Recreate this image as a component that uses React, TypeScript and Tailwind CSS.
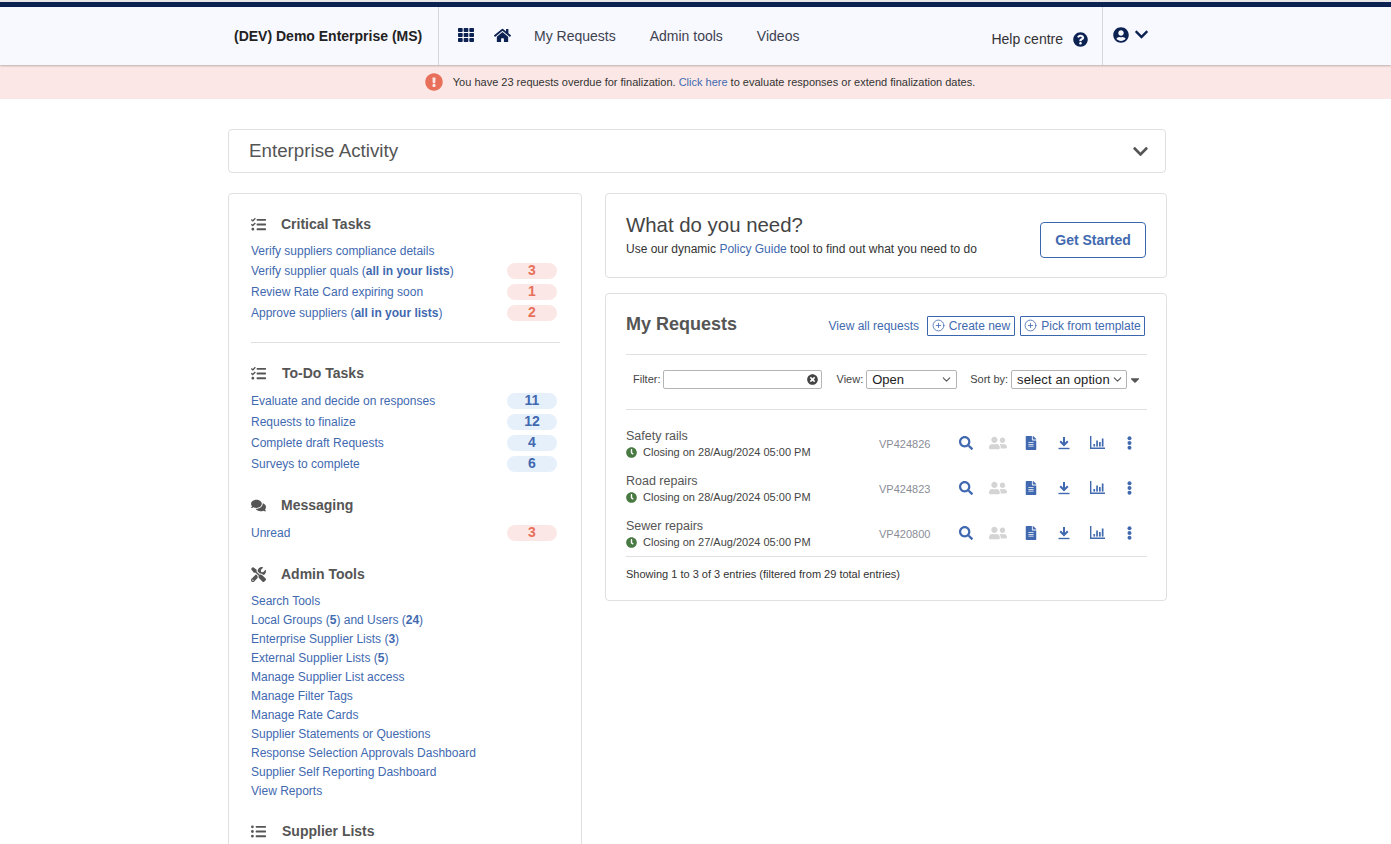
import React from 'react';
import {
  FaTh, FaHome, FaQuestionCircle, FaUserCircle, FaChevronDown, FaExclamationCircle, FaTasks, FaComments, FaTools,
  FaListUl, FaSearch, FaUserFriends, FaFileAlt, FaClock, FaTimesCircle, FaCaretDown,
} from 'react-icons/fa';
import { CirclePlus, ChevronDown } from 'lucide-react';

const link = 'text-[#4169b0]';

const DownloadIcon = () => (
  <svg width="12" height="14" viewBox="0 0 12 14" fill="none" className="text-[#4169b0]">
    <path d="M6 1v7.5M2.2 5.2 6 9l3.8-3.8" stroke="currentColor" strokeWidth="2" />
    <rect x="0.5" y="11.8" width="11" height="1.4" fill="currentColor" />
  </svg>
);

const BarsIcon = () => (
  <svg width="15" height="13" viewBox="0 0 15 13" fill="currentColor">
    <path d="M0 0h1.4v11.6H15V13H0z" />
    <rect x="3.4" y="8" width="1.7" height="2.6" />
    <rect x="6.2" y="4.5" width="1.7" height="6.1" />
    <rect x="9" y="6" width="1.7" height="4.6" />
    <rect x="11.8" y="2.5" width="1.7" height="8.1" />
  </svg>
);

const DotsIcon = () => (
  <svg width="5" height="14" viewBox="0 0 5 14" fill="currentColor">
    <circle cx="2.5" cy="2.2" r="2" />
    <circle cx="2.5" cy="7" r="2" />
    <circle cx="2.5" cy="11.8" r="2" />
  </svg>
);

const Badge = ({ n, red }: { n: number; red?: boolean }) => (
  <span className={`ml-auto mr-[3px] w-[50px] h-4 rounded-lg flex items-center justify-center text-[14px] font-bold ${red ? 'bg-[#fbe8e6] text-[#e8705a]' : 'bg-[#e6f0fb] text-[#4169b0]'}`}>
    {n}
  </span>
);

const Heading = ({ icon, children, gap = 'ml-[15px]' }: { icon: React.ReactNode; children: React.ReactNode; gap?: string }) => (
  <div className="flex items-center h-5 text-[#555]">
    <span className="w-[15px] flex justify-center">{icon}</span>
    <span className={`${gap} text-[14px] font-bold`}>{children}</span>
  </div>
);

const Row = ({ children, n, red }: { children: React.ReactNode; n?: number; red?: boolean }) => (
  <div className={`flex items-center h-[21px] text-[12px] ${link}`}>
    <span>{children}</span>
    {n !== undefined && <Badge n={n} red={red} />}
  </div>
);

const adminLinks: React.ReactNode[] = [
  'Search Tools',
  <>Local Groups (<b>5</b>) and Users (<b>24</b>)</>,
  <>Enterprise Supplier Lists (<b>3</b>)</>,
  <>External Supplier Lists (<b>5</b>)</>,
  'Manage Supplier List access',
  'Manage Filter Tags',
  'Manage Rate Cards',
  'Supplier Statements or Questions',
  'Response Selection Approvals Dashboard',
  'Supplier Self Reporting Dashboard',
  'View Reports',
];

const requests = [
  { name: 'Safety rails', date: '28/Aug/2024', id: 'VP424826' },
  { name: 'Road repairs', date: '28/Aug/2024', id: 'VP424823' },
  { name: 'Sewer repairs', date: '27/Aug/2024', id: 'VP420800' },
];

const App: React.FC = () => {
  return (
    <div className="h-screen overflow-hidden bg-white font-['Liberation_Sans',Arial,sans-serif]">
      <div className="h-[2px] bg-[#e8e8e8]" />
      <div className="h-[5px] bg-[#0b2252]" />
      <header className="relative z-10 h-[58px] bg-[#f8f8ff] shadow-[0_1px_2px_rgba(0,0,0,0.25)] flex pl-[234px]">
        <div className="w-[205px] h-full border-r border-[#d5d5dc] flex items-center">
          <span className="text-[14px] font-bold text-[#222]">(DEV) Demo Enterprise (MS)</span>
        </div>
        <div className="flex items-center pl-[19px] text-[#0b2252]">
          <FaTh size={16} className="mb-[2px]" />
          <FaHome size={17} className="ml-5 mb-[2px]" />
          <span className="ml-[23px] text-[14px] text-[#3d4250]">My Requests</span>
          <span className="ml-[34px] text-[14px] text-[#3d4250]">Admin tools</span>
          <span className="ml-[34px] text-[14px] text-[#3d4250]">Videos</span>
        </div>
        <div className="flex items-center ml-[192px] pt-[6px] text-[#0b2252]">
          <span className="text-[14px] text-[#333]">Help centre</span>
          <FaQuestionCircle size={15} className="ml-[10px]" />
        </div>
        <div className="ml-[14px] h-full border-l border-[#d5d5dc] flex items-center pl-[10px] pb-[3px] text-[#0b2252]">
          <FaUserCircle size={16} />
          <FaChevronDown size={15} className="ml-[5px]" />
        </div>
      </header>
      <div className="h-[34px] bg-[#fbe8e6] flex items-center justify-center text-[11px] text-[#333] pl-[9px]">
        <FaExclamationCircle size={18} className="text-[#e8705a] mr-[10px]" />
        <span>You have 23 requests overdue for finalization. <span className={link}>Click here</span> to evaluate responses or extend finalization dates.</span>
      </div>

      <main className="ml-[228px] w-[939px] pt-[30px]">
        <div className="w-[938px] h-[44px] rounded border border-[#e0e0e0] flex items-center justify-between pl-[20px] pr-[16px]">
          <span className="text-[18.75px] text-[#555]">Enterprise Activity</span>
          <FaChevronDown size={17} className="text-[#555]" />
        </div>

        <div className="flex gap-[23px] mt-5 items-start">
          <aside className="w-[354px] shrink-0 rounded border border-[#e0e0e0] pl-[22px] pr-[21px] pt-[20px] pb-10">
            <Heading icon={<FaTasks size={15} />}>Critical Tasks</Heading>
            <div className="mt-[7px]">
              <div className={`flex items-center h-[19px] text-[12px] ${link}`}>Verify suppliers compliance details</div>
              <Row n={3} red>Verify supplier quals (<b>all in your lists</b>)</Row>
              <Row n={1} red>Review Rate Card expiring soon</Row>
              <Row n={2} red>Approve suppliers (<b>all in your lists</b>)</Row>
            </div>
            <div className="border-t border-[#e0e0e0] mt-[19px] mb-5" />
            <Heading icon={<FaTasks size={15} />} gap="ml-[16px]">To-Do Tasks</Heading>
            <div className="mt-[7px]">
              <Row n={11}>Evaluate and decide on responses</Row>
              <Row n={12}>Requests to finalize</Row>
              <Row n={4}>Complete draft Requests</Row>
              <Row n={6}>Surveys to complete</Row>
            </div>
            <div className="mt-[21px]">
              <Heading icon={<FaComments size={17} />}>Messaging</Heading>
            </div>
            <div className="mt-[7px]">
              <Row n={3} red>Unread</Row>
            </div>
            <div className="mt-[21px]">
              <Heading icon={<FaTools size={15} />}>Admin Tools</Heading>
            </div>
            <div className="mt-[7px]">
              {adminLinks.map((l, i) => (
                <div key={i} className={`h-[19px] flex items-center text-[12px] whitespace-pre ${link}`}>
                  <span>{l}</span>
                </div>
              ))}
            </div>
            <div className="mt-[21px]">
              <Heading icon={<FaListUl size={15} />} gap="ml-[16px]">Supplier Lists</Heading>
            </div>
          </aside>

          <section className="flex-1 min-w-0">
            <div className="h-[85px] rounded border border-[#e0e0e0] flex items-center justify-between pl-5 pr-5">
              <div>
                <div className="text-[20.4px] leading-[24px] text-[#444]">What do you need?</div>
                <div className="text-[12px] leading-[18px] text-[#333] mt-[3px]">
                  Use our dynamic <span className={link}>Policy Guide</span> tool to find out what you need to do
                </div>
              </div>
              <button className="w-[106px] h-9 rounded border border-[#3a66ad] text-[14px] font-bold text-[#4169b0] mt-[9px]">Get Started</button>
            </div>

            <div className="mt-[15px] h-[308px] rounded border border-[#e0e0e0] pl-5 pr-[19px]">
              <div className="flex items-center h-[61px] border-b border-[#e0e0e0] pt-[3px]">
                <span className="text-[18px] font-bold text-[#555] pb-[2px]">My Requests</span>
                <span className={`ml-auto text-[12px] ${link}`}>View all requests</span>
                <span className="ml-2 h-5 w-[88px] border border-[#3a66ad] rounded-[1px] flex items-center justify-center gap-1 text-[12px] text-[#4169b0]">
                  <CirclePlus size={13} strokeWidth={1.5} />Create new
                </span>
                <span className="ml-[5px] mr-[2px] h-5 w-[125px] border border-[#3a66ad] rounded-[1px] flex items-center justify-center gap-1 text-[12px] text-[#4169b0]">
                  <CirclePlus size={13} strokeWidth={1.5} />Pick from template
                </span>
              </div>

              <div className="flex items-center h-[55px] border-b border-[#e0e0e0] pl-[7px] pb-[5px] text-[11px] text-[#444]">
                <span>Filter:</span>
                <div className="ml-[2px] w-[159px] h-[19px] border border-[#b5b5b5] rounded-[2px] flex items-center justify-end pr-[3px]">
                  <FaTimesCircle size={11} className="text-[#444]" />
                </div>
                <span className="ml-[15px]">View:</span>
                <div className="ml-[3px] w-[91px] h-[19px] border border-[#b5b5b5] rounded-[2px] flex items-center justify-between pl-[5px] pr-[3px] text-[13px] text-[#222]">
                  Open<ChevronDown size={13} className="text-[#555]" />
                </div>
                <span className="ml-[13px]">Sort by:</span>
                <div className="ml-[3px] w-[116px] h-[19px] border border-[#b5b5b5] rounded-[2px] flex items-center justify-between pl-[5px] pr-[2px] text-[13px] text-[#222] tracking-[0.1px]">
                  select an option<ChevronDown size={13} className="text-[#555] shrink-0" />
                </div>
                <FaCaretDown size={14} className="ml-[1px] mt-[1px] text-[#555]" />
              </div>

              <div className="pt-[11px] border-b border-[#e0e0e0] h-[147px]">
                {requests.map((r) => (
                  <div key={r.id} className="h-[45px] flex items-center">
                    <div className="w-[253px]">
                      <div className="text-[12.5px] leading-[16px] text-[#555]">{r.name}</div>
                      <div className="flex items-center mt-[1px] text-[11px] leading-[14px] text-[#444]">
                        <FaClock size={11} className="text-[#4a7a43] mr-[6px]" />
                        Closing on {r.date} 05:00 PM
                      </div>
                    </div>
                    <span className="text-[11px] text-[#8a8d96] w-[79px] pt-[2px]">{r.id}</span>
                    <div className="flex items-center text-[#4169b0] mb-[2px]">
                      <span className="w-[16px] flex justify-center"><FaSearch size={14} /></span>
                      <span className="w-[18px] ml-[15px] flex justify-center text-[#d4d4d4]"><FaUserFriends size={18} /></span>
                      <span className="w-[12px] ml-[18px] flex justify-center"><FaFileAlt size={14} /></span>
                      <span className="w-[12px] ml-[21px] flex justify-center"><DownloadIcon /></span>
                      <span className="w-[15px] ml-[20px] flex justify-center"><BarsIcon /></span>
                      <span className="w-[5px] ml-[22px] flex justify-center"><DotsIcon /></span>
                    </div>
                  </div>
                ))}
              </div>
              <div className="pt-[9px] text-[11px] text-[#333]">Showing 1 to 3 of 3 entries (filtered from 29 total entries)</div>
            </div>
          </section>
        </div>
      </main>
    </div>
  );
};

export default App;
